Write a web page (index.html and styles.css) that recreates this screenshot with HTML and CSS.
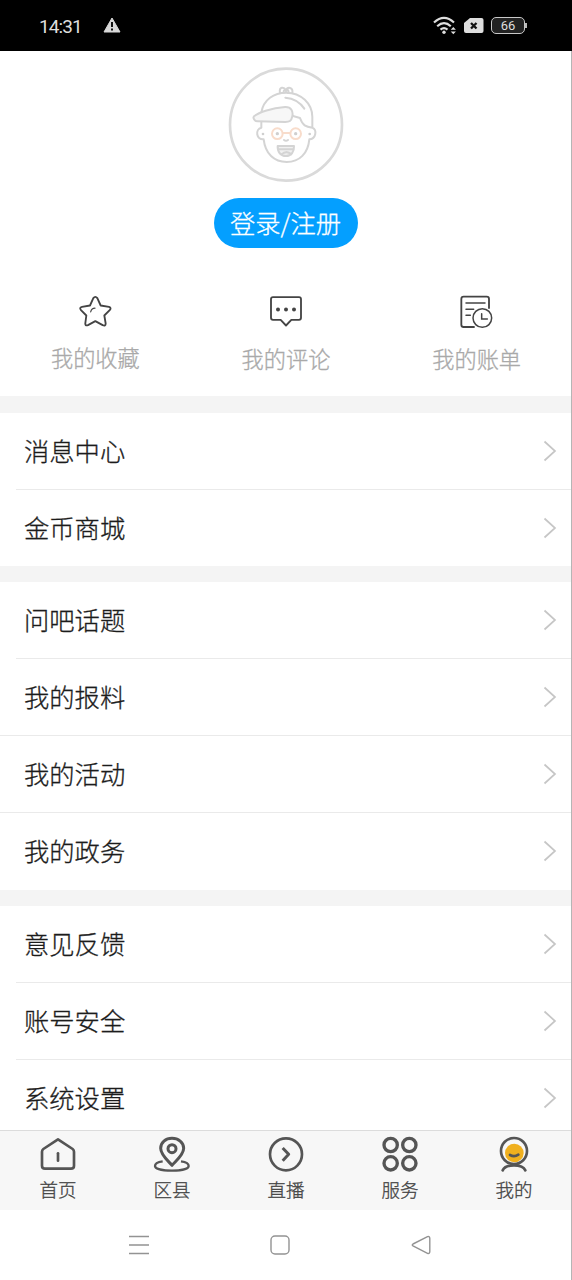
FILE: index.html
```html
<!DOCTYPE html>
<html lang="zh-CN">
<head>
<meta charset="utf-8">
<title>我的</title>
<link rel="stylesheet" href="styles.css">
</head>
<body>
<div class="screen">
  <header class="status">
    <span class="time">14:31</span>
    <svg class="warn" width="18" height="16" viewBox="0 0 18 16"><path d="M9 1 17 15H1Z" fill="#d8d8d8" stroke="#d8d8d8" stroke-linejoin="round"/><path d="M9 5v5M9 11.5v2" stroke="#111" stroke-width="2"/></svg>
    <div class="status-right">
      <svg width="24" height="20" viewBox="0 0 24 20" fill="none" stroke="#dedede" stroke-width="2.2"><path d="M1 6.5Q11 -2.8 21 6.5M4.2 10.2Q11 4 17.8 10.2M7.5 13.6Q11 10.6 14.5 13.6"/><circle cx="11" cy="16.2" r="1.7" fill="#dedede" stroke="none"/><path d="m17.7 13.8 2.6-2.8 2.6 2.8ZM17.7 15.5l2.6 2.8 2.6-2.8Z" fill="#dedede" stroke="none"/></svg>
      <svg class="sim" width="20" height="17" viewBox="0 0 20 17"><path d="M6 1h11.500q2 0 2 2v11q0 2-2 2h-15.500q-2 0-2-2V6Z" fill="#dedede"/><path d="m7 6 5.500 5.500M12.500 6 7 11.500" stroke="#111" stroke-width="2.300"/></svg>
      <div class="battery">66</div>
    </div>
  </header>
  <main class="content">
    <section class="profile">
      <svg class="avatar" width="116" height="116" viewBox="54 21 348 348" fill="none" stroke="#d4d4d4" stroke-width="6" stroke-linecap="round" stroke-linejoin="round">
        <circle cx="228" cy="194" r="168" stroke="#dadada" stroke-width="8"/>
        <path d="M154 158C160 119 192 98 229 98C273 98 307 131 307 171V203M154 184V203M161 238C166 281 192 306 230 306C269 306 294 280 298 238M154 203C135 207 138 240 161 238M307 203C322 210 318 237 298 238M249 168L270 174C278 196 287 201 307 203"/>
        <path d="M132 169C143 160 183 143 225 141C244 140 250 155 247 169C244 184 238 186 226 186L142 184C133 184 128 173 132 169Z" fill="#f7f7f7"/>
        <path d="M210 99C206 79 222 80 228 91C232 80 250 80 247 99M222 98C219 91 224 87 228 94C233 86 238 92 234 99M226 113C250 115 268 123 283 146M222 240Q228 245 234 240"/>
        <path d="M203 258H252C253 276 243 288 228 288C212 288 202 276 203 258ZM205 268H251M214 284Q229 269 244 283" fill="#f1f1f1"/>
        <g stroke="#f8dccb"><circle cx="202" cy="221" r="16"/><circle cx="257" cy="221" r="16"/><path d="M218 219H241"/></g>
        <g fill="#cfcfcf" stroke="none"><circle cx="202" cy="221" r="5"/><circle cx="257" cy="221" r="5"/><circle cx="159" cy="222" r="4"/><circle cx="299" cy="222" r="4"/></g>
      </svg>
      <button class="login">登录/注册</button>
      <nav class="shortcuts">
        <a class="shortcut favorite">
          <svg width="33" height="33" viewBox="147 45 99 99" fill="none" stroke="#444" stroke-width="5.500" stroke-linejoin="round" stroke-linecap="round"><path d="M190 53Q196 45 202 53L212 75L237 79Q245 82 239 89L223 105L227 129Q227 138 218 134L196 122L174 134Q165 137 166 128L169 105L153 89Q147 81 156 79L180 75Z"/><path d="M182 94Q185 83 195 83" stroke-width="3.500"/></svg>
          <span>我的收藏</span>
        </a>
        <a class="shortcut">
          <svg width="34" height="33" viewBox="117 45 102 99" fill="none" stroke="#444" stroke-width="5.500" stroke-linejoin="round"><path d="M129 50H207Q213 50 213 56V112Q213 118 207 118H184L168 135L152 118H129Q123 118 123 112V56Q123 50 129 50Z"/><g fill="#444" stroke="none"><circle cx="144" cy="87" r="6"/><circle cx="168" cy="87" r="6"/><circle cx="192" cy="87" r="6"/></g></svg>
          <span>我的评论</span>
        </a>
        <a class="shortcut">
          <svg width="35" height="34" viewBox="117 42 105 102" fill="none" stroke="#444" stroke-width="5.500" stroke-linecap="round"><path d="M207 81V54Q207 47 200 47H131Q124 47 124 54V131Q124 138 131 138H162"/><path d="M138 66H195M138 85H161M138 103H151" stroke-width="4.500"/><circle cx="187" cy="111" r="28" stroke-width="4.500"/><path d="M185 98V114H202" stroke-width="4.500"/></svg>
          <span>我的账单</span>
        </a>
      </nav>
    </section>
    <section class="group">
      <a class="row">消息中心<svg class="chevron" viewBox="0 0 14 22"><path d="m1.500 1.500 10.500 9.500-10.500 9.500"/></svg></a>
      <a class="row">金币商城<svg class="chevron" viewBox="0 0 14 22"><path d="m1.500 1.500 10.500 9.500-10.500 9.500"/></svg></a>
    </section>
    <section class="group">
      <a class="row">问吧话题<svg class="chevron" viewBox="0 0 14 22"><path d="m1.500 1.500 10.500 9.500-10.500 9.500"/></svg></a>
      <a class="row">我的报料<svg class="chevron" viewBox="0 0 14 22"><path d="m1.500 1.500 10.500 9.500-10.500 9.500"/></svg></a>
      <a class="row full">我的活动<svg class="chevron" viewBox="0 0 14 22"><path d="m1.500 1.500 10.500 9.500-10.500 9.500"/></svg></a>
      <a class="row full">我的政务<svg class="chevron" viewBox="0 0 14 22"><path d="m1.500 1.500 10.500 9.500-10.500 9.500"/></svg></a>
    </section>
    <section class="group">
      <a class="row">意见反馈<svg class="chevron" viewBox="0 0 14 22"><path d="m1.500 1.500 10.500 9.500-10.500 9.500"/></svg></a>
      <a class="row">账号安全<svg class="chevron" viewBox="0 0 14 22"><path d="m1.500 1.500 10.500 9.500-10.500 9.500"/></svg></a>
      <a class="row">系统设置<svg class="chevron" viewBox="0 0 14 22"><path d="m1.500 1.500 10.500 9.500-10.500 9.500"/></svg></a>
    </section>
  </main>
  <nav class="tabs">
    <a class="tab"><svg width="38" height="38" viewBox="115 30 114 114" fill="none" stroke="#555" stroke-width="8" stroke-linejoin="round" stroke-linecap="round"><path d="M172 43L216 72Q220 75 220 80V122Q220 131 211 131H133Q124 131 124 122V80Q124 75 128 72Z"/><path d="M172 85V107"/></svg><span>首页</span></a>
    <a class="tab"><svg width="38" height="38" viewBox="458 30 114 114" fill="none" stroke="#555" stroke-width="9" stroke-linejoin="round"><path d="M515 121C506 110 481 91 481 70C481 52 496 40 515 40C534 40 550 52 550 70C550 91 524 110 515 121Z"/><circle cx="515" cy="71" r="12"/><path d="M487 109C473 111 464 117 464 123C464 132 488 137 515 137C542 137 565 132 565 123C565 117 556 111 542 109" stroke-width="7"/></svg><span>区县</span></a>
    <a class="tab"><svg width="38" height="38" viewBox="201 31 114 114" fill="none" stroke="#555" stroke-width="8" stroke-linejoin="round"><circle cx="258" cy="89" r="48"/><path d="M248 70L266 89L248 108" stroke-width="9"/></svg><span>直播</span></a>
    <a class="tab"><svg width="38" height="38" viewBox="34 31 114 114" fill="none" stroke="#555" stroke-width="10"><circle cx="63" cy="61" r="20"/><circle cx="119" cy="61" r="20"/><circle cx="63" cy="116" r="20"/><circle cx="119" cy="116" r="20"/></svg><span>服务</span></a>
    <a class="tab"><svg width="38" height="38" viewBox="376 31 114 114" fill="none" stroke="#555" stroke-width="8" stroke-linecap="round"><circle cx="434" cy="85" r="28" fill="#f0b01e" stroke="none"/><circle cx="433" cy="79" r="39"/><path d="M421 91Q434 98 446 90M399 137C408 117 458 117 467 137"/></svg><span>我的</span></a>
  </nav>
  <footer class="system-nav">
    <svg width="20" height="20" viewBox="0 0 20 20"><path d="M0 1.500h20M0 10h20M0 18.500h20"/></svg>
    <svg width="20" height="20" viewBox="0 0 20 20"><rect x="1" y="1" width="18" height="18" rx="4"/></svg>
    <svg width="20" height="20" viewBox="0 0 20 20"><path d="M2 9 16.500 1.700Q18.800 1 18.800 3.500v13q0 2.500-2.300 1.800L2 11Q.5 10 2 9Z"/></svg>
  </footer>
</div>
</body>
</html>
```
FILE: styles.css
```css
* { box-sizing: border-box; }

body {
  margin: 0;
  background: #fff;
  color: #1c1c1c;
  font-family: "Noto Sans CJK SC", sans-serif;
  font-weight: 300;
  -webkit-text-stroke-width: .3px;
}

svg { display: block; flex: none; }

.screen {
  width: 572px;
  height: 1280px;
  display: flex;
  flex-direction: column;
  overflow: hidden;
  background: linear-gradient(#b5b5b5, #b5b5b5) right / 1px 100% no-repeat #fff;
}

.status {
  height: 51px;
  flex: none;
  display: flex;
  align-items: center;
  padding: 0 47px 0 39px;
  background: #000;
  color: #dedede;
  -webkit-text-stroke-width: 0;
}

.time {
  width: 64px;
  font: 400 19px/24px Roboto, sans-serif;
  letter-spacing: -.9px;
  padding-top: 2px;
}

.warn { margin-bottom: 2px; }

.status-right {
  margin-left: auto;
  display: flex;
  align-items: center;
}

.sim { margin-left: 7px; }

.battery {
  position: relative;
  width: 34px;
  height: 17px;
  margin-left: 7px;
  border: 1.500px solid #c8c8c8;
  border-radius: 5px;
  background: #222;
  font: 400 13px/15px Roboto, sans-serif;
  text-align: center;
}

.battery::after {
  content: "";
  position: absolute;
  right: -3px;
  top: 5px;
  width: 2px;
  height: 5px;
  background: #bbb;
}

.content {
  flex: 1;
  min-height: 0;
  overflow: hidden;
  margin-right: 1px;
}

.profile {
  width: 572px;
  height: 345px;
  display: flex;
  flex-direction: column;
  align-items: center;
  padding-top: 16px;
}

.login {
  width: 144px;
  height: 50px;
  margin: 15px 1px 0 0;
  padding: 0 0 1px;
  border: 0;
  border-radius: 25px;
  background: #049fff;
  color: #fff;
  font: 300 25.300px/49px "Noto Sans CJK SC", sans-serif;
}

.shortcuts {
  width: 572px;
  margin-top: 47px;
  display: grid;
  grid-template-columns: repeat(3, 1fr);
}

.shortcut {
  display: flex;
  flex-direction: column;
  align-items: center;
  gap: 13px;
  color: #a9a9a9;
  font-size: 22.2px;
  line-height: 32px;
}

.shortcut svg { height: 34px; }
.favorite { gap: 12px; }

.group {
  border-top: 16px solid #f4f4f4;
}

.profile + .group { border-top-width: 17px; }

.row {
  position: relative;
  height: 77px;
  display: flex;
  align-items: center;
  justify-content: space-between;
  padding: 0 14px 3px 24px;
  font-size: 25.300px;
  line-height: 36px;
}

.profile + .group .row:last-child { height: 76px; padding-bottom: 2px; }

.row + .row::before {
  content: "";
  position: absolute;
  top: -1px;
  left: 16px;
  right: 0;
  height: 1px;
  background: #eaeaea;
}

.row.full::before { left: 0; }

.chevron {
  width: 14px;
  height: 22px;
  margin-top: 1px;
  fill: none;
  stroke: #c6c6c6;
  stroke-width: 1.700;
}

.tabs {
  height: 80px;
  flex: none;
  display: grid;
  grid-template-columns: repeat(5, 1fr);
  margin-right: 1px;
  padding-left: 1px;
  border-top: 1px solid #dcdcdc;
  background: #f7f7f7;
}

.tab {
  display: flex;
  flex-direction: column;
  align-items: center;
  padding-top: 4px;
  color: #444;
  font-size: 18.500px;
  line-height: 26px;
}

.tab span { margin-top: 3px; }

.system-nav {
  height: 70px;
  flex: none;
  display: flex;
  align-items: center;
  gap: 121px;
  padding-left: 129px;
}

.system-nav svg {
  fill: none;
  stroke: #939393;
  stroke-width: 1.400;
}
```
